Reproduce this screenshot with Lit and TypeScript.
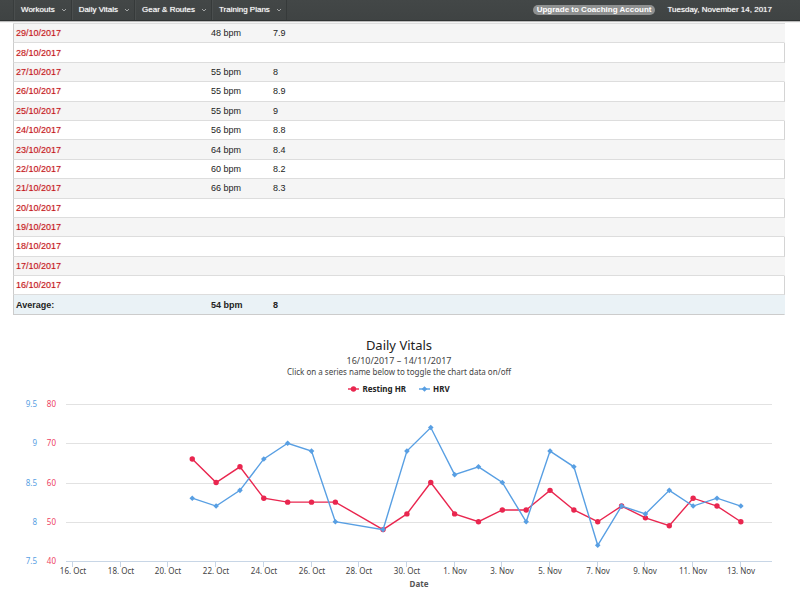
import { LitElement, html, css, svg, nothing } from "lit";
import { customElement, state } from "lit/decorators.js";
import { classMap } from "lit/directives/class-map.js";

interface Day {
  date: string;
  bpm?: number;
  hrv?: number;
}

const DAYS: Day[] = [
  { date: "29/10/2017", bpm: 48, hrv: 7.9 },
  { date: "28/10/2017" },
  { date: "27/10/2017", bpm: 55, hrv: 8 },
  { date: "26/10/2017", bpm: 55, hrv: 8.9 },
  { date: "25/10/2017", bpm: 55, hrv: 9 },
  { date: "24/10/2017", bpm: 56, hrv: 8.8 },
  { date: "23/10/2017", bpm: 64, hrv: 8.4 },
  { date: "22/10/2017", bpm: 60, hrv: 8.2 },
  { date: "21/10/2017", bpm: 66, hrv: 8.3 },
  { date: "20/10/2017" },
  { date: "19/10/2017" },
  { date: "18/10/2017" },
  { date: "17/10/2017" },
  { date: "16/10/2017" },
];

// [days since 16 October, resting heart rate, heart rate variability]
const POINTS: [number, number, number][] = [
  [5, 66, 8.3], [6, 60, 8.2], [7, 64, 8.4], [8, 56, 8.8], [9, 55, 9],
  [10, 55, 8.9], [11, 55, 8], [13, 48, 7.9], [14, 52, 8.9], [15, 60, 9.2],
  [16, 52, 8.6], [17, 50, 8.7], [18, 53, 8.5], [19, 53, 8], [20, 58, 8.9],
  [21, 53, 8.7], [22, 50, 7.7], [23, 54, 8.2], [24, 51, 8.1], [25, 49, 8.4],
  [26, 56, 8.2], [27, 54, 8.3], [28, 50, 8.2],
];

const TICKS = [
  "16. Oct", "18. Oct", "20. Oct", "22. Oct", "24. Oct", "26. Oct", "28. Oct", "30. Oct",
  "1. Nov", "3. Nov", "5. Nov", "7. Nov", "9. Nov", "11. Nov", "13. Nov",
];

@customElement("site-header")
class SiteHeader extends LitElement {
  static styles = css`
    :host { display: block; }
    .bar {
      display: flex;
      align-items: stretch;
      height: 20px;
      padding: 0 28px 0 13px;
      background: linear-gradient(#434747, #3f4343);
      border-bottom: 1px solid #2f3232;
      box-shadow: 0 1px 1px #bbb;
      font: 8px/20px "Liberation Sans", Arial, sans-serif;
      color: #fff;
    }
    nav { display: flex; flex: 1; border-left: 1px solid #393d3d; }
    .item {
      display: flex;
      align-items: center;
      gap: 6px;
      padding: 0 4px 0 6px;
      border: 0;
      border-right: 1px solid #363a3a;
      border-left: 1px solid #4a4e4e;
      background: none;
      color: #fff;
      font: inherit;
      text-shadow: 0 0 1px #ccc;
      cursor: pointer;
    }
    .item svg { width: 6px; height: 4px; }
    .right { display: flex; align-items: center; gap: 12px; }
    .upgrade {
      padding: 0 4px;
      border-radius: 5px;
      background: #8f9191;
      color: #fff;
      font-weight: bold;
      line-height: 10px;
      text-decoration: none;
    }
    .today { text-shadow: 0 0 1px #ccc; }
  `;

  render() {
    return html`<header class="bar">
      <nav aria-label="Main">
        ${["Workouts", "Daily Vitals", "Gear & Routes", "Training Plans"].map(
          (label) => html`<button class="item" type="button">
            ${label}<svg viewBox="0 0 6 4" aria-hidden="true">
              <path d="M1 1L3 3L5 1" fill="none" stroke="#a4a6a6" stroke-width="1" />
            </svg>
          </button>`
        )}
      </nav>
      <div class="right">
        <a class="upgrade" href="#upgrade">Upgrade to Coaching Account</a>
        <span class="today">Tuesday, November 14, 2017</span>
      </div>
    </header>`;
  }
}

@customElement("vitals-table")
class VitalsTable extends LitElement {
  static styles = css`
    :host { display: block; padding: 2px 15px 0 13px; }
    table {
      width: 100%;
      height: 292px;
      table-layout: fixed;
      border-collapse: separate;
      border-spacing: 0;
      border-top: 1px solid #ddd;
      font: 9px/16px "Liberation Sans", Arial, sans-serif;
      color: #222;
    }
    .date { width: 198px; }
    .bpm { width: 62px; }
    td, th {
      box-sizing: border-box;
      padding: 0;
      border-bottom: 1px solid #ddd;
      text-align: left;
      vertical-align: middle;
      font-weight: normal;
    }
    td:last-child { border-right: 1px solid #d4d4d4; }
    th { padding-left: 2px; border-left: 1px solid #ccc; }
    .odd { background: #f5f5f5; }
    .odd td:last-child { border-right-color: #f5f5f5; }
    a { color: #c4161c; text-decoration: none; text-shadow: 0 0 1px #e8a0a0; }
    .average { background: #eaf2f6; }
    .average th, .average td { border-bottom-color: #ccc; font-weight: bold; }
    .average td:last-child { border-right-color: #eaf2f6; }
  `;

  render() {
    return html`<table aria-label="Daily vitals">
      <colgroup><col class="date" /><col class="bpm" /><col /></colgroup>
      <tbody>
        ${DAYS.map(
          (d, i) => html`<tr class=${classMap({ odd: i % 2 === 0 })}>
            <th scope="row"><a href="#day">${d.date}</a></th>
            <td>${d.bpm ? `${d.bpm} bpm` : nothing}</td>
            <td>${d.hrv ?? nothing}</td>
          </tr>`
        )}
        <tr class="average"><th scope="row">Average:</th><td>54 bpm</td><td>8</td></tr>
      </tbody>
    </table>`;
  }
}

@customElement("vitals-chart")
class VitalsChart extends LitElement {
  static styles = css`
    :host {
      display: block;
      padding-top: 21px;
      font: 8px/10px "Noto Sans", "Open Sans", sans-serif;
      color: #444;
    }
    .head { padding-right: 2px; text-align: center; }
    h2 { margin: 0; font-size: 13px; line-height: 18px; font-weight: normal; color: #222; }
    p { margin: 0; }
    .range { font-size: 9px; line-height: 13px; }
    .legend { display: flex; justify-content: center; gap: 13px; margin: 7px 0 1px; }
    .key {
      display: flex;
      align-items: center;
      gap: 3px;
      padding: 0;
      border: 0;
      background: none;
      color: #222;
      font: bold 8px/10px "Noto Sans", "Open Sans", sans-serif;
      cursor: pointer;
    }
    .key svg { width: 11px; height: 8px; }
    .off { color: #ccc; }
    .plot { display: block; width: 100%; height: 206px; }
    .grid { stroke: #e2e2e2; }
    .axis { stroke: #c8d6e6; }
    .hr-line { fill: none; stroke: #e9264f; stroke-width: 1.4; }
    .hr-dot { fill: #e9264f; }
    .hrv-line { fill: none; stroke: #589fe3; stroke-width: 1.4; }
    .hrv-dot { fill: #589fe3; }
    .hr-label { fill: #ee4264; text-anchor: end; }
    .hrv-label { fill: #589fe3; text-anchor: end; }
    .tick { fill: #444; text-anchor: middle; }
    .title { fill: #555; font-weight: bold; text-anchor: middle; }
  `;

  @state() private width = 800;
  @state() private showHr = true;
  @state() private showHrv = true;

  private observer = new ResizeObserver((entries) => {
    this.width = Math.round(entries[0].contentRect.width);
  });

  connectedCallback() {
    super.connectedCallback();
    this.observer.observe(this);
  }

  disconnectedCallback() {
    this.observer.disconnect();
    super.disconnectedCallback();
  }

  private renderPlot() {
    const left = 66;
    const right = this.width - 28;
    const top = 9;
    const bottom = 166;
    const step = (right - left) / 29.6;
    const x = (day: number) => left + 7 + day * step;
    const yHr = (v: number) => bottom - ((v - 40) / 40) * (bottom - top);
    const yHrv = (v: number) => bottom - ((v - 7.5) / 2) * (bottom - top);
    const hr = POINTS.map(([d, v]) => [x(d), yHr(v)]);
    const hrv = POINTS.map(([d, , v]) => [x(d), yHrv(v)]);
    const rows = [0, 1, 2, 3, 4].map((i) => ({
      y: Math.round(bottom - (i * (bottom - top)) / 4),
      hr: 40 + i * 10,
      hrv: 7.5 + i / 2,
    }));

    return html`<svg class="plot" role="img" aria-label="Daily vitals chart">
      ${rows.map(
        (r) => svg`
          <line class=${r.hr === 40 ? "axis" : "grid"} x1=${left} x2=${right} y1=${r.y + 0.5} y2=${r.y + 0.5} />
          <text class="hrv-label" x="37" y=${r.y + 3}>${r.hrv}</text>
          <text class="hr-label" x="56" y=${r.y + 3}>${r.hr}</text>`
      )}
      ${TICKS.map((label, i) => {
        const tx = Math.round(x(i * 2));
        return svg`
          <line class="axis" x1=${tx - 0.5} x2=${tx - 0.5} y1=${bottom} y2=${bottom + 6} />
          <text class="tick" x=${tx} y=${bottom + 13}>${label}</text>`;
      })}
      <text class="title" x=${(left + right) / 2} y=${bottom + 26}>Date</text>
      ${this.showHr
        ? svg`<polyline class="hr-line" points=${hr.map((p) => p.join(",")).join(" ")} />
            ${hr.map(([cx, cy]) => svg`<circle class="hr-dot" cx=${cx} cy=${cy} r="2.7" />`)}`
        : nothing}
      ${this.showHrv
        ? svg`<polyline class="hrv-line" points=${hrv.map((p) => p.join(",")).join(" ")} />
            ${hrv.map(
              ([cx, cy]) =>
                svg`<path class="hrv-dot" d="M${cx} ${cy - 2.8}l2.8 2.8l-2.8 2.8l-2.8 -2.8z" />`
            )}`
        : nothing}
    </svg>`;
  }

  render() {
    return html`<section>
      <div class="head">
        <h2>Daily Vitals</h2>
        <p class="range">16/10/2017 – 14/11/2017</p>
        <p>Click on a series name below to toggle the chart data on/off</p>
        <div class="legend">
          <button
            type="button"
            class=${classMap({ key: true, off: !this.showHr })}
            aria-pressed=${this.showHr}
            @click=${() => (this.showHr = !this.showHr)}
          >
            <svg viewBox="0 0 11 8" aria-hidden="true">
              <path class="hr-line" d="M0 4H11" /><circle class="hr-dot" cx="5.5" cy="4" r="2.7" />
            </svg>Resting HR
          </button>
          <button
            type="button"
            class=${classMap({ key: true, off: !this.showHrv })}
            aria-pressed=${this.showHrv}
            @click=${() => (this.showHrv = !this.showHrv)}
          >
            <svg viewBox="0 0 11 8" aria-hidden="true">
              <path class="hrv-line" d="M0 4H11" /><path class="hrv-dot" d="M5.5 1.2L8.3 4L5.5 6.8L2.7 4Z" />
            </svg>HRV
          </button>
        </div>
      </div>
      ${this.renderPlot()}
    </section>`;
  }
}

@customElement("app-root")
class AppRoot extends LitElement {
  static styles = css`
    :host { display: block; background: #fff; }
  `;

  render() {
    return html`<site-header></site-header>
      <main>
        <vitals-table></vitals-table>
        <vitals-chart></vitals-chart>
      </main>`;
  }
}
